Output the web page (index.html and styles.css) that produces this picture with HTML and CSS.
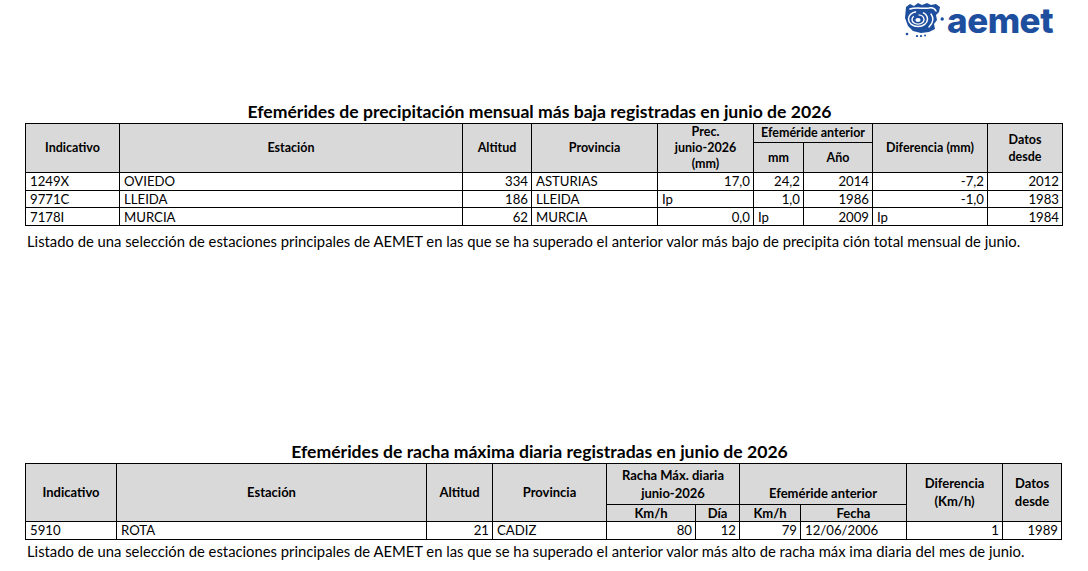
FILE: index.html
```html
<!DOCTYPE html>
<html lang="es">
<head>
<meta charset="utf-8">
<title>Efemérides AEMET junio 2026</title>
<link rel="stylesheet" href="styles.css">
</head>
<body>
<header class="top">
  <div class="logo">
    <svg class="logo-mark" viewBox="0 0 40 35" width="40" height="35" aria-hidden="true">
      <path d="M2 5 L6 2 L10 4 L14 1 L18 3 L23 1 L27 3 L32 2 L36 5 L35 10 L32 13 L33 18 L30 22 L31 27 L25 30 L17 31 L9 29 L4 24 L1 16 Z" fill="#1e4f9f"/>
      <path d="M6 7 C12 5 19 7 25 6 C29 5 31 7 32 9" fill="none" stroke="#fff" stroke-width="1.5" stroke-linecap="round"/>
      <ellipse cx="14" cy="17" rx="9.5" ry="7.5" fill="none" stroke="#fff" stroke-width="1.5" stroke-dasharray="38 7"/>
      <ellipse cx="14" cy="17.5" rx="6" ry="4.6" fill="none" stroke="#fff" stroke-width="1.4" stroke-dasharray="20 5"/>
      <ellipse cx="14" cy="18" rx="2.6" ry="2" fill="#fff"/>
      <path d="M27 12 C30 16 29 21 25 25" fill="none" stroke="#fff" stroke-width="1.4" stroke-linecap="round"/>
      <circle cx="38.2" cy="17" r="1.7" fill="#1e4f9f"/>
      <circle cx="3" cy="32" r="1.3" fill="#1e4f9f"/>
      <circle cx="13" cy="34" r="1.1" fill="#1e4f9f"/>
      <circle cx="17" cy="34" r="1.1" fill="#1e4f9f"/>
      <circle cx="21" cy="33.5" r="1" fill="#1e4f9f"/>
    </svg>
    <span class="logo-text">aemet</span>
  </div>
</header>

<main class="content">
  <section class="block block-prec">
    <h2 class="title">Efemérides de precipitación mensual más baja registradas en junio de 2026</h2>
    <table class="tbl t1">
      <colgroup>
        <col class="w94"><col class="w343"><col class="w69"><col class="w126"><col class="w96"><col class="w50"><col class="w69"><col class="w115"><col class="w75">
      </colgroup>
      <thead>
        <tr class="h1">
          <th rowspan="2">Indicativo</th>
          <th rowspan="2">Estación</th>
          <th rowspan="2">Altitud</th>
          <th rowspan="2">Provincia</th>
          <th rowspan="2">Prec.<br>junio-2026<br>(mm)</th>
          <th colspan="2">Efeméride anterior</th>
          <th rowspan="2">Diferencia (mm)</th>
          <th rowspan="2" class="two">Datos<br>desde</th>
        </tr>
        <tr class="h2">
          <th>mm</th>
          <th>Año</th>
        </tr>
      </thead>
      <tbody>
        <tr><td>1249X</td><td>OVIEDO</td><td class="r">334</td><td>ASTURIAS</td><td class="r">17,0</td><td class="r">24,2</td><td class="r">2014</td><td class="r">-7,2</td><td class="r">2012</td></tr>
        <tr><td>9771C</td><td>LLEIDA</td><td class="r">186</td><td>LLEIDA</td><td>Ip</td><td class="r">1,0</td><td class="r">1986</td><td class="r">-1,0</td><td class="r">1983</td></tr>
        <tr><td>7178I</td><td>MURCIA</td><td class="r">62</td><td>MURCIA</td><td class="r">0,0</td><td>Ip</td><td class="r">2009</td><td>Ip</td><td class="r">1984</td></tr>
      </tbody>
    </table>
    <p class="note">Listado de una selección de estaciones principales de AEMET en las que se ha superado el anterior valor más bajo de precipita ción total mensual de junio.</p>
  </section>

  <section class="block block-racha">
    <h2 class="title">Efemérides de racha máxima diaria registradas en junio de 2026</h2>
    <table class="tbl t2">
      <colgroup>
        <col class="w91"><col class="w310"><col class="w66"><col class="w114"><col class="w89"><col class="w44"><col class="w61"><col class="w106"><col class="w96"><col class="w59">
      </colgroup>
      <thead>
        <tr class="h1">
          <th rowspan="2">Indicativo</th>
          <th rowspan="2">Estación</th>
          <th rowspan="2">Altitud</th>
          <th rowspan="2">Provincia</th>
          <th colspan="2" class="two">Racha Máx. diaria<br>junio-2026</th>
          <th colspan="2" class="bottom">Efeméride anterior</th>
          <th rowspan="2" class="two">Diferencia<br>(Km/h)</th>
          <th rowspan="2" class="two">Datos<br>desde</th>
        </tr>
        <tr class="h2">
          <th>Km/h</th>
          <th>Día</th>
          <th>Km/h</th>
          <th>Fecha</th>
        </tr>
      </thead>
      <tbody>
        <tr><td>5910</td><td>ROTA</td><td class="r">21</td><td>CADIZ</td><td class="r">80</td><td class="r">12</td><td class="r">79</td><td>12/06/2006</td><td class="r">1</td><td class="r">1989</td></tr>
      </tbody>
    </table>
    <p class="note">Listado de una selección de estaciones principales de AEMET en las que se ha superado el anterior valor más alto de racha máx ima diaria del mes de junio.</p>
  </section>
</main>
</body>
</html>
```

FILE: styles.css
```css
html, body {
  margin: 0;
  padding: 0;
  background: #ffffff;
  color: #000000;
  font-family: Lato, "Liberation Sans", sans-serif;
}

.top {
  height: 102px;
  display: flex;
  justify-content: flex-end;
  align-items: flex-start;
  padding-right: 35px;
  box-sizing: border-box;
}

.logo {
  display: flex;
  align-items: flex-start;
  gap: 3px;
  padding-top: 2px;
}

.logo-mark {
  display: block;
}

.logo-text {
  font-family: Inter, "Noto Sans", sans-serif;
  font-weight: 800;
  font-size: 35px;
  line-height: 36px;
  letter-spacing: -0.5px;
  color: #1e4f9f;
}

.content {
  margin-left: 25px;
  width: 1037px;
}

.title {
  margin: 0;
  height: 20px;
  font-size: 17.6px;
  line-height: 20px;
  font-weight: 700;
  text-align: center;
  padding-right: 8px;
}

.tbl {
  border-collapse: collapse;
  table-layout: fixed;
  width: 1037px;
  margin-top: 1px;
  font-size: 13.2px;
}

.tbl th,
.tbl td {
  border: 1px solid #000;
  padding: 0 4px;
  white-space: nowrap;
  overflow: hidden;
}

.tbl th {
  background: #d9d9d9;
  font-weight: 700;
  font-size: 12.5px;
  line-height: 16px;
  text-align: center;
  vertical-align: middle;
}

.tbl td {
  text-align: left;
  line-height: 16px;
  padding-top: 0;
  padding-bottom: 0;
}

.tbl td.r {
  text-align: right;
  padding-right: 3px;
}

.t1 .h1 { height: 19px; }
.t1 .h2 { height: 30px; }
.t1 tbody tr { height: 17.67px; }

.t2 .h1 { height: 41px; }
.t2 .h2 { height: 16px; }
.t2 tbody tr { height: 18px; }

.t2 th { font-size: 13px; }
.t2 th.two { line-height: 18px; }
.t1 th.two { line-height: 17px; }
.t2 th.bottom {
  vertical-align: bottom;
  padding-bottom: 3px;
}

.w94 { width: 94px; }
.w343 { width: 343px; }
.w69 { width: 69px; }
.w126 { width: 126px; }
.w96 { width: 96px; }
.w50 { width: 50px; }
.w115 { width: 115px; }
.w75 { width: 75px; }

.w91 { width: 91px; }
.w310 { width: 310px; }
.w66 { width: 66px; }
.w114 { width: 114px; }
.w89 { width: 89px; }
.w44 { width: 44px; }
.w61 { width: 61px; }
.w106 { width: 106px; }
.w59 { width: 59px; }

.note {
  margin: 6px 0 0;
  padding-left: 2px;
  font-size: 14.8px;
  line-height: 18px;
  white-space: nowrap;
}

.block-racha {
  margin-top: 192px;
}

.block-racha .note {
  margin-top: 2px;
}
```
